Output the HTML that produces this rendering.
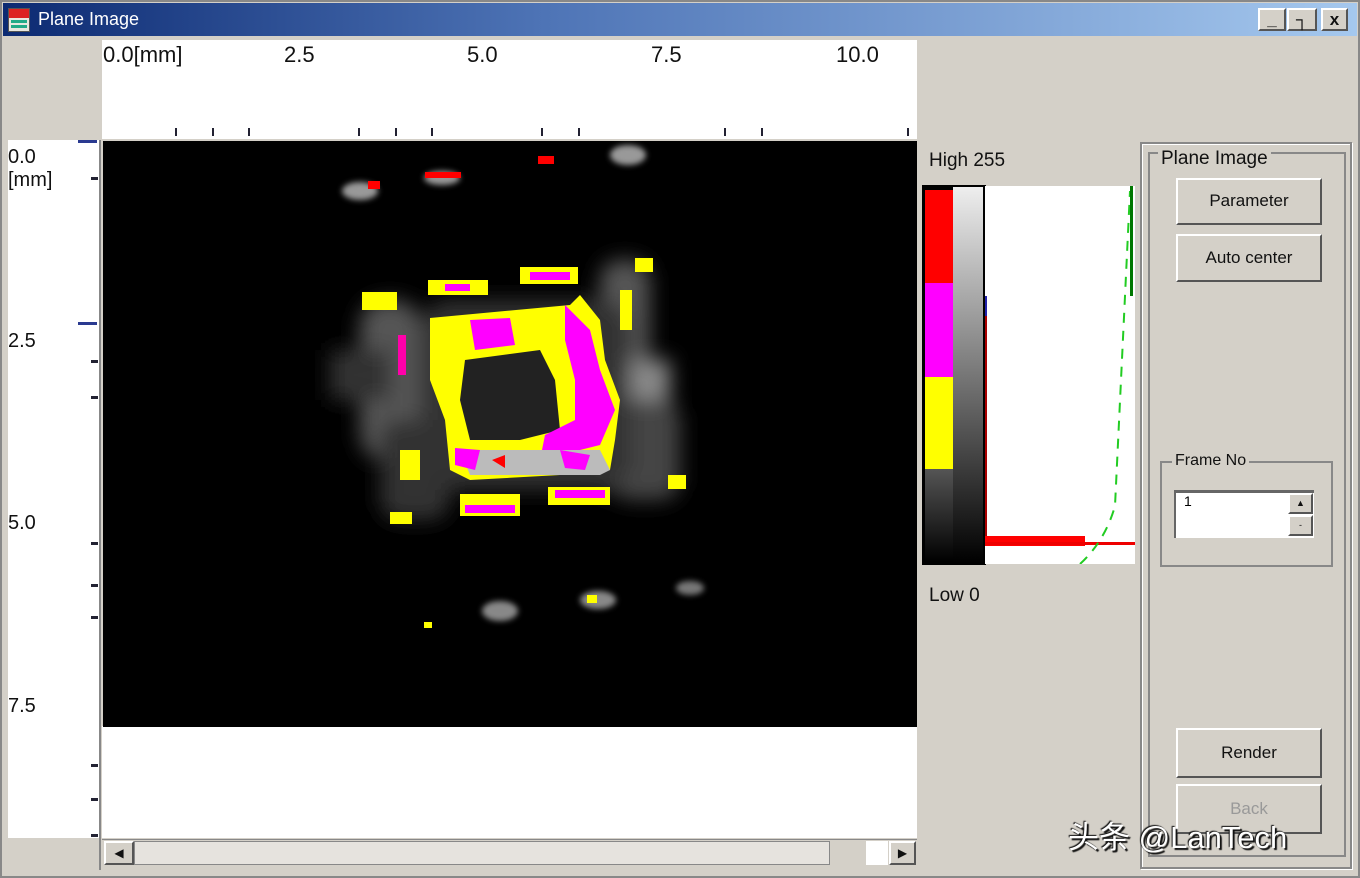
<!DOCTYPE html>
<html><head><meta charset="utf-8"><style>
body{margin:0;width:1360px;height:878px;background:#d4d0c8;font-family:"Liberation Sans",sans-serif;position:relative;overflow:hidden}
.a{position:absolute}
.btn{position:absolute;background:#d4d0c8;border-top:2px solid #fff;border-left:2px solid #fff;border-right:2px solid #555;border-bottom:2px solid #555;box-sizing:border-box;font-size:17px;text-align:center;color:#111}
.t{position:absolute;font-size:22px;color:#111;font-family:"Liberation Sans Narrow","Liberation Sans",sans-serif}
.tk{position:absolute;width:2px;height:8px;background:#223}
.lt{position:absolute;width:7px;height:3px;background:#223;left:91px}
</style></head><body>
<div class="a" style="left:0;top:0;width:1360px;height:878px;border:2px solid #888;box-sizing:border-box"></div>
<div class="a" style="left:3px;top:3px;width:1354px;height:33px;background:linear-gradient(90deg,#0c2a72,#4e74b6 40%,#a5c8ee)"></div>
<div class="a" style="left:8px;top:8px;width:20px;height:22px;background:#e8e8e0;border:1px solid #555"><div style="height:9px;background:#d22"></div><div style="margin:2px 2px;height:3px;background:#2a8"></div><div style="margin:2px 2px;height:3px;background:#2a8"></div></div>
<div class="a" style="left:38px;top:9px;color:#fff;font-size:18px">Plane Image</div>
<div class="btn" style="left:1258px;top:8px;width:28px;height:23px;font-weight:bold">_</div>
<div class="btn" style="left:1287px;top:8px;width:30px;height:23px;font-weight:bold">&#x2510;</div>
<div class="btn" style="left:1321px;top:8px;width:27px;height:23px;font-weight:bold">x</div>

<div class="a" style="left:102px;top:40px;width:815px;height:99px;background:#fff"></div>
<div class="t" style="left:103px;top:42px">0.0[mm]</div>
<div class="t" style="left:284px;top:42px">2.5</div>
<div class="t" style="left:467px;top:42px">5.0</div>
<div class="t" style="left:651px;top:42px">7.5</div>
<div class="t" style="left:836px;top:42px">10.0</div>
<div class="tk" style="left:175px;top:128px"></div><div class="tk" style="left:212px;top:128px"></div><div class="tk" style="left:248px;top:128px"></div>
<div class="tk" style="left:358px;top:128px"></div><div class="tk" style="left:395px;top:128px"></div><div class="tk" style="left:431px;top:128px"></div>
<div class="tk" style="left:541px;top:128px"></div><div class="tk" style="left:578px;top:128px"></div>
<div class="tk" style="left:724px;top:128px"></div><div class="tk" style="left:761px;top:128px"></div><div class="tk" style="left:907px;top:128px"></div>

<div class="a" style="left:8px;top:140px;width:92px;height:698px;background:#fff"></div>
<div class="a" style="left:99px;top:140px;width:2px;height:730px;background:#888"></div>
<div class="t" style="left:8px;top:146px;font-size:20px">0.0<br>[mm]</div>
<div class="t" style="left:8px;top:330px;font-size:20px">2.5</div>
<div class="t" style="left:8px;top:512px;font-size:20px">5.0</div>
<div class="t" style="left:8px;top:695px;font-size:20px">7.5</div>
<div class="a" style="left:78px;top:140px;width:19px;height:3px;background:#2a3a90"></div>
<div class="a" style="left:78px;top:322px;width:19px;height:3px;background:#2a3a90"></div>
<div class="lt" style="top:177px"></div><div class="lt" style="top:360px"></div><div class="lt" style="top:396px"></div><div class="lt" style="top:542px"></div><div class="lt" style="top:584px"></div><div class="lt" style="top:616px"></div><div class="lt" style="top:764px"></div><div class="lt" style="top:798px"></div><div class="lt" style="top:834px"></div>

<div class="a" style="left:102px;top:726px;width:815px;height:112px;background:#fff"></div>
<svg class="a" style="left:103px;top:141px" width="814" height="586" viewBox="103 141 814 586">
<defs><filter id="b"><feGaussianBlur stdDeviation="10"/></filter><filter id="s"><feGaussianBlur stdDeviation="3"/></filter></defs>
<rect x="103" y="141" width="814" height="586" fill="#000"/>
<g filter="url(#b)" fill="#555">
<rect x="360" y="300" width="60" height="160" rx="25"/>
<rect x="600" y="260" width="50" height="110" rx="20"/>
<rect x="600" y="360" width="70" height="40" fill="#888"/>
<rect x="440" y="420" width="170" height="70" fill="#aaa"/>
<rect x="610" y="400" width="70" height="100" rx="20" fill="#444"/>
<rect x="380" y="420" width="70" height="100" rx="20" fill="#333"/>
<rect x="330" y="350" width="60" height="50" fill="#333"/>
<rect x="420" y="300" width="210" height="190" rx="30" fill="#333"/>
</g>
<g filter="url(#s)">
<ellipse cx="360" cy="191" rx="18" ry="9" fill="#999"/>
<ellipse cx="628" cy="155" rx="18" ry="10" fill="#999"/>
<ellipse cx="500" cy="611" rx="18" ry="10" fill="#888"/>
<ellipse cx="598" cy="600" rx="18" ry="9" fill="#888"/>
<ellipse cx="690" cy="588" rx="14" ry="7" fill="#777"/>
<ellipse cx="442" cy="178" rx="18" ry="7" fill="#999"/>
</g>
<path d="M430 318 L570 305 L580 295 L600 320 L605 360 L620 400 L615 440 L610 470 L560 475 L470 480 L450 470 L445 420 L430 380 Z" fill="#ff0"/>
<path d="M465 360 L540 350 L555 380 L560 430 L520 440 L470 440 L460 400 Z" fill="#222"/>
<path d="M565 305 L590 330 L600 370 L615 410 L600 445 L540 460 L545 435 L575 420 L575 380 L565 340 Z" fill="#f0f"/>
<path d="M470 320 L510 318 L515 345 L475 350 Z" fill="#f0f"/>
<path d="M460 450 L600 450 L610 470 L600 475 L470 475 Z" fill="#bbb"/>
<path d="M455 448 L480 450 L475 470 L455 465 Z" fill="#f0f"/>
<path d="M560 450 L590 455 L585 470 L565 468 Z" fill="#f0f"/>
<path d="M492 460 L505 455 L505 468 Z" fill="#f00"/>
<rect x="428" y="280" width="60" height="15" fill="#ff0"/><rect x="445" y="284" width="25" height="7" fill="#f0f"/>
<rect x="520" y="267" width="58" height="17" fill="#ff0"/><rect x="530" y="272" width="40" height="8" fill="#f0f"/>
<rect x="362" y="292" width="35" height="18" fill="#ff0"/>
<rect x="635" y="258" width="18" height="14" fill="#ff0"/>
<rect x="400" y="450" width="20" height="30" fill="#ff0"/>
<rect x="390" y="512" width="22" height="12" fill="#ff0"/>
<rect x="460" y="494" width="60" height="22" fill="#ff0"/><rect x="465" y="505" width="50" height="8" fill="#f0f"/>
<rect x="548" y="487" width="62" height="18" fill="#ff0"/><rect x="555" y="490" width="50" height="8" fill="#f0f"/>
<rect x="668" y="475" width="18" height="14" fill="#ff0"/>
<rect x="398" y="335" width="8" height="40" fill="#f0a"/>
<rect x="620" y="290" width="12" height="40" fill="#ff0"/>
<rect x="368" y="181" width="12" height="8" fill="#f00"/>
<rect x="425" y="172" width="36" height="6" fill="#f00"/>
<rect x="538" y="156" width="16" height="8" fill="#f00"/>
<rect x="587" y="595" width="10" height="8" fill="#ff0"/>
<rect x="424" y="622" width="8" height="6" fill="#ff0"/>
</svg>

<div class="a" style="left:102px;top:839px;width:815px;height:28px;background:#d4d0c8;border-top:1px solid #888"></div>
<div class="btn" style="left:104px;top:841px;width:30px;height:24px;font-size:12px;line-height:20px">&#9664;</div>
<div class="a" style="left:134px;top:841px;width:696px;height:24px;background:#e6e3de;border:1px solid #888;box-sizing:border-box"></div>
<div class="a" style="left:866px;top:841px;width:22px;height:24px;background:#fff"></div>
<div class="btn" style="left:889px;top:841px;width:27px;height:24px;font-size:12px;line-height:20px">&#9654;</div>

<div class="a" style="left:929px;top:150px;font-size:19px;color:#111">High 255</div>
<div class="a" style="left:929px;top:585px;font-size:19px;color:#111">Low 0</div>
<div class="a" style="left:922px;top:185px;width:64px;height:380px;background:#000"></div>
<div class="a" style="left:925px;top:190px;width:28px;height:93px;background:#f00"></div>
<div class="a" style="left:925px;top:283px;width:28px;height:94px;background:#f0f"></div>
<div class="a" style="left:925px;top:377px;width:28px;height:92px;background:#ff0"></div>
<div class="a" style="left:925px;top:469px;width:28px;height:93px;background:linear-gradient(#555,#000)"></div>
<div class="a" style="left:953px;top:187px;width:30px;height:376px;background:linear-gradient(#eee,#000)"></div>
<div class="a" style="left:985px;top:186px;width:150px;height:378px;background:#fff"></div>
<svg class="a" style="left:985px;top:186px" width="150" height="378">
<rect x="0" y="110" width="2" height="250" fill="#a00"/>
<rect x="0" y="110" width="2" height="20" fill="#22a"/>
<rect x="0" y="350" width="100" height="10" fill="#f00"/>
<rect x="0" y="356" width="150" height="3" fill="#e00"/>
<path d="M95 378 Q120 355 130 320 L145 5" stroke="#2c2" stroke-width="2" fill="none" stroke-dasharray="10 8"/>
<rect x="145" y="0" width="3" height="110" fill="#070"/>
</svg>

<div class="a" style="left:1140px;top:142px;width:212px;height:727px;border:2px solid #888;box-shadow:inset 1px 1px #fff,1px 1px #fff;box-sizing:border-box"></div>
<div class="a" style="left:1148px;top:152px;width:198px;height:705px;border:2px solid #888;box-sizing:border-box"></div>
<div class="a" style="left:1158px;top:148px;background:#d4d0c8;font-size:19px;color:#111;padding:0 3px">Plane Image</div>
<div class="btn" style="left:1176px;top:178px;width:146px;height:47px;line-height:42px">Parameter</div>
<div class="btn" style="left:1176px;top:234px;width:146px;height:48px;line-height:43px">Auto center</div>
<div class="a" style="left:1160px;top:461px;width:173px;height:106px;border:2px solid #888;box-sizing:border-box"></div>
<div class="a" style="left:1172px;top:452px;background:#d4d0c8;font-size:16px;color:#111;padding:0 3px">Frame No</div>
<div class="a" style="left:1174px;top:490px;width:140px;height:48px;background:#fff;border-top:3px solid #666;border-left:2px solid #666;box-sizing:border-box;font-size:14px;padding-left:8px">1</div>
<div class="btn" style="left:1288px;top:493px;width:25px;height:21px;font-size:9px;line-height:17px">&#9650;</div>
<div class="btn" style="left:1288px;top:515px;width:25px;height:21px;font-size:9px;line-height:17px">-</div>
<div class="btn" style="left:1176px;top:728px;width:146px;height:50px;line-height:45px">Render</div>
<div class="btn" style="left:1176px;top:784px;width:146px;height:50px;line-height:45px;color:#999">Back</div>
<div class="a" style="left:1068px;top:812px;font-size:31px;color:#fff;font-family:'Liberation Sans','Noto Sans CJK SC',sans-serif;text-shadow:2px 2px 1px #111,-1px -1px 1px #111">头条 @LanTech</div>
</body></html>
